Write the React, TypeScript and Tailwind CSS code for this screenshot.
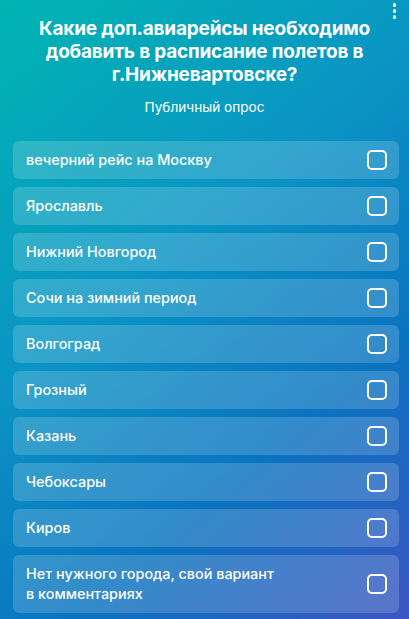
import { useState } from 'react'

const options = [
  'вечерний рейс на Москву',
  'Ярославль',
  'Нижний Новгород',
  'Сочи на зимний период',
  'Волгоград',
  'Грозный',
  'Казань',
  'Чебоксары',
  'Киров',
]

function Option({ label, checked, onToggle }: { label: React.ReactNode; checked: boolean; onToggle: () => void }) {
  return (
    <button
      onClick={onToggle}
      className="flex items-center justify-between gap-3 w-full rounded-[6px] bg-white/[0.17] pl-[13px] pr-3 py-[9px] text-left"
    >
      <span className="text-[14.4px] leading-5 font-medium text-white">{label}</span>
      <span className={`w-5 h-5 flex-shrink-0 rounded-[5px] border-2 border-white ${checked ? 'bg-white' : ''}`} />
    </button>
  )
}

export default function App() {
  const [picked, setPicked] = useState<number[]>([])

  function toggle(i: number) {
    setPicked(p => (p.includes(i) ? p.filter(x => x !== i) : [...p, i]))
  }

  return (
    <div
      className="relative w-[409px] h-[619px] overflow-hidden bg-[linear-gradient(140deg,#00b5b2_0%,#0a95c4_40%,#0a74c0_70%,#3b56c2_100%)] font-['Inter','Roboto',sans-serif] text-white"
    >
      {/* kebab menu */}
      <div className="absolute top-[3px] right-[13px] flex flex-col gap-[2.5px]">
        <span className="w-[3.5px] h-[3.5px] rounded-full bg-white" />
        <span className="w-[3.5px] h-[3.5px] rounded-full bg-white" />
        <span className="w-[3.5px] h-[3.5px] rounded-full bg-white" />
      </div>

      <div className="pt-[17px] px-4 text-center">
        <h1 className="text-[19px] leading-[23px] font-bold tracking-[-0.2px]">
          Какие доп.авиарейсы необходимо
          <br />
          добавить в расписание полетов в
          <br />
          г.Нижневартовске?
        </h1>
        <p className="mt-3 text-[13.6px] leading-[18px]">Публичный опрос</p>
      </div>

      <div className="mt-[25px] px-[13px] pr-[10px] flex flex-col gap-2">
        {options.map((o, i) => (
          <Option key={o} label={o} checked={picked.includes(i)} onToggle={() => toggle(i)} />
        ))}
        <Option
          label={<>Нет нужного города, свой вариант<br />в комментариях</>}
          checked={picked.includes(99)}
          onToggle={() => toggle(99)}
        />
      </div>
    </div>
  )
}
